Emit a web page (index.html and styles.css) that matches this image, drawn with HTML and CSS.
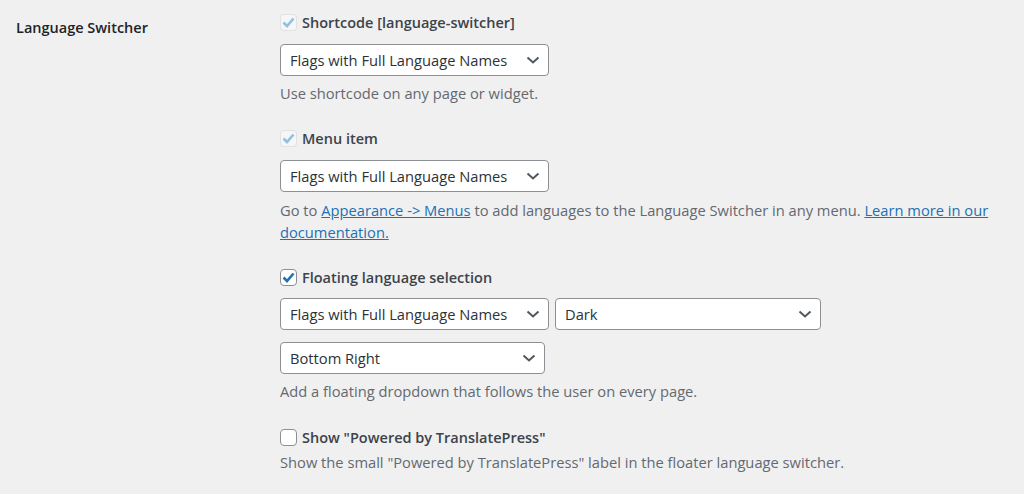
FILE: index.html
```html
<!DOCTYPE html>
<html lang="en">
    <head>
        <meta charset="UTF-8" />
        <meta name="viewport" content="width=device-width, initial-scale=1.0" />
        <title>Language Switcher settings</title>
        <link rel="stylesheet" href="styles.css">
    </head>
    <body>
        <div class="settings-row">
            <div class="field-label">Language Switcher</div>
            <div class="field">
                <label class="option">
                    <span class="check is-checked is-disabled">
                        <svg viewBox="0 0 17 17" width="17" height="17"><polyline points="3.5,8.5 7,12 13.5,4.5" /></svg>
                    </span>
                    Shortcode [language-switcher]
                </label>
                <div class="select-wrap">
                    <select class="select wide">
                        <option>Flags with Full Language Names</option>
                    </select>
                    <svg class="chevron" viewBox="0 0 14 8" width="14" height="8"><polyline points="1.5,1.5 7,6.5 12.5,1.5" /></svg>
                </div>
                <p class="description">Use shortcode on any page or widget.</p>

                <label class="option spaced">
                    <span class="check is-checked is-disabled">
                        <svg viewBox="0 0 17 17" width="17" height="17"><polyline points="3.5,8.5 7,12 13.5,4.5" /></svg>
                    </span>
                    Menu item
                </label>
                <div class="select-wrap">
                    <select class="select wide">
                        <option>Flags with Full Language Names</option>
                    </select>
                    <svg class="chevron" viewBox="0 0 14 8" width="14" height="8"><polyline points="1.5,1.5 7,6.5 12.5,1.5" /></svg>
                </div>
                <p class="description loose">Go to <a href="#">Appearance -&gt; Menus</a> to add languages to the Language Switcher in any menu. <a href="#">Learn more in our</a><br><a href="#">documentation.</a></p>

                <label class="option spaced">
                    <span class="check is-checked">
                        <svg viewBox="0 0 17 17" width="17" height="17"><polyline points="3.5,8.5 7,12 13.5,4.5" /></svg>
                    </span>
                    Floating language selection
                </label>
                <div class="select-row">
                    <div class="select-wrap">
                        <select class="select wide">
                            <option>Flags with Full Language Names</option>
                        </select>
                        <svg class="chevron" viewBox="0 0 14 8" width="14" height="8"><polyline points="1.5,1.5 7,6.5 12.5,1.5" /></svg>
                    </div>
                    <div class="select-wrap">
                        <select class="select theme">
                            <option>Dark</option>
                        </select>
                        <svg class="chevron" viewBox="0 0 14 8" width="14" height="8"><polyline points="1.5,1.5 7,6.5 12.5,1.5" /></svg>
                    </div>
                </div>
                <div class="select-wrap stacked">
                    <select class="select position">
                        <option>Bottom Right</option>
                    </select>
                    <svg class="chevron" viewBox="0 0 14 8" width="14" height="8"><polyline points="1.5,1.5 7,6.5 12.5,1.5" /></svg>
                </div>
                <p class="description">Add a floating dropdown that follows the user on every page.</p>

                <label class="option spaced-lg">
                    <span class="check"></span>
                    Show "Powered by TranslatePress"
                </label>
                <p class="description tight">Show the small "Powered by TranslatePress" label in the floater language switcher.</p>
            </div>
        </div>
    </body>
</html>
```

FILE: styles.css
```css
body {
    margin: 0;
    background-color: #f0f0f1;
    color: #3c434a;
    font-family: "Open Sans", "Noto Sans", sans-serif;
    font-size: 14.7px;
}
.settings-row {
    display: grid;
    grid-template-columns: 264px 1fr;
    padding-left: 16px;
}
.field-label {
    padding-top: 17px;
    font-weight: 600;
    font-size: 14.5px;
    line-height: 22px;
    color: #1d2327;
}
.field {
    padding-top: 11px;
    padding-right: 24px;
}
.option {
    display: flex;
    align-items: center;
    gap: 5px;
    height: 22px;
    font-weight: 600;
    font-size: 14.5px;
    color: #3c434a;
}
.option.spaced {
    margin-top: 23px;
}
.option.spaced-lg {
    margin-top: 24px;
}
.check {
    width: 15px;
    height: 15px;
    border: 1px solid #8c8f94;
    border-radius: 4px;
    background: #fff;
    position: relative;
    flex: none;
}
.check svg {
    position: absolute;
    left: -1px;
    top: -1px;
    fill: none;
    stroke: #2271b1;
    stroke-width: 2.6;
}
.check.is-disabled {
    border-color: rgba(220, 220, 222, 0.8);
    background: rgba(255, 255, 255, 0.4);
}
.check.is-disabled svg {
    stroke: #8fc1e3;
}
.select-wrap {
    position: relative;
    width: fit-content;
    margin-top: 11px;
}
.select-wrap.stacked {
    margin-top: 12px;
}
.select-row {
    display: flex;
    gap: 6px;
    margin-top: 10px;
}
.select-row .select-wrap {
    margin-top: 0;
}
.select {
    appearance: none;
    -webkit-appearance: none;
    display: block;
    height: 32px;
    padding: 0 24px 0 9px;
    border: 1px solid #8c8f94;
    border-radius: 4px;
    background: #fff;
    color: #2c3338;
    font-family: inherit;
    font-size: 14.7px;
}
.select.wide {
    width: 269px;
}
.select.theme {
    width: 266px;
}
.select.position {
    width: 265px;
}
.chevron {
    position: absolute;
    right: 9px;
    top: 12px;
    fill: none;
    stroke: #50575e;
    stroke-width: 2;
    pointer-events: none;
}
.description {
    margin: 6px 0 0;
    line-height: 22px;
    color: #646970;
}
.description.loose {
    margin-top: 7px;
}
.description.tight {
    margin-top: 3px;
}
a {
    color: #2271b1;
}
```
